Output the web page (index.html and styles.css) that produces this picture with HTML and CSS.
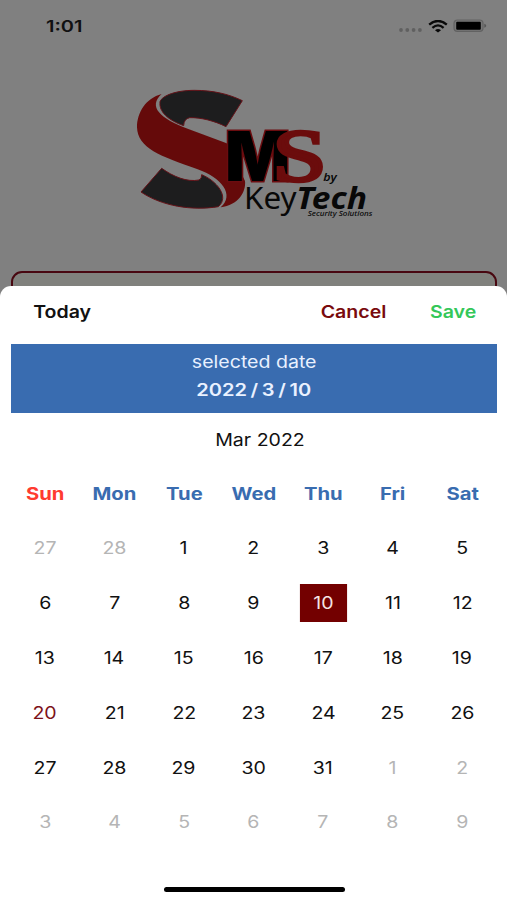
FILE: index.html
```
<!DOCTYPE html>
<html lang="en">
<head>
    <meta charset="UTF-8">
    <meta name="viewport" content="width=device-width, initial-scale=1.0">
    <title>SMS by KeyTech</title>
    <link rel="stylesheet" href="styles.css">
</head>
<body>
    <div class="screen">
        <!-- Status bar -->
        <div class="status-bar">
            <span class="time">1:01</span>
            <div class="status-icons">
                <svg class="signal" width="24" height="4" viewBox="0 0 24 4">
                    <circle cx="2" cy="2" r="1.9"/>
                    <circle cx="8.3" cy="2" r="1.9"/>
                    <circle cx="14.6" cy="2" r="1.9"/>
                    <circle cx="20.9" cy="2" r="1.9"/>
                </svg>
                <svg class="wifi" width="20" height="13" viewBox="0 0 20 13">
                    <path d="M1.2 4.6Q10 -2.6 18.8 4.6" stroke-width="2.4"/>
                    <path d="M4.4 7.8Q10 3 15.6 7.8" stroke-width="2.3"/>
                    <path class="dot" d="M7 10.2Q10 7.8 13 10.2L10 12.6Z"/>
                </svg>
                <svg class="battery" width="34" height="14" viewBox="0 0 34 14">
                    <rect class="shell" x="1" y="1" width="29" height="11.4" rx="3.4"/>
                    <rect x="3.2" y="2.8" width="24.6" height="8" rx="1"/>
                    <path class="cap" d="M31.3 4.8Q33.2 5.4 33.2 6.8T31.3 8.8Z"/>
                </svg>
            </div>
        </div>

        <!-- Logo -->
        <svg class="logo" width="260" height="145" viewBox="0 0 780 435">
            <path class="logo-dark" d="M105 65C112 46 155 31 208 31C265 31 310 42 352 62L303 140C268 122 225 112 194 113Q177 116 176 137C130 120 101 96 105 65Z"/>
            <path class="logo-dark" d="M110 265C145 290 186 307 222 300Q231 296 230 284C274 302 315 350 280 380C200 393 110 378 48 336Z"/>
            <path class="logo-red" d="M110 42C62 55 36 98 36 142C38 205 105 228 218 268C290 293 330 345 287 382C340 376 364 335 360 303L305 190L190 147C105 116 68 80 110 42Z"/>
            <text class="logo-m" x="300" y="303" textLength="196" lengthAdjust="spacingAndGlyphs">M</text>
            <text class="logo-s" x="442" y="304" textLength="164" lengthAdjust="spacingAndGlyphs">S</text>
            <text class="logo-by" x="595" y="303" textLength="40" lengthAdjust="spacingAndGlyphs">by</text>
            <text class="logo-key" x="357" y="386" textLength="158" lengthAdjust="spacingAndGlyphs">Key</text>
            <text class="logo-tech" x="514" y="386" textLength="212" lengthAdjust="spacingAndGlyphs">Tech</text>
            <text class="logo-tag" x="548" y="409" textLength="194" lengthAdjust="spacingAndGlyphs">Security Solutions</text>
        </svg>

        <div class="field"></div>

        <!-- Date picker -->
        <div class="sheet">
            <div class="toolbar">
                <span class="today">Today</span>
                <span class="cancel">Cancel</span>
                <span class="save">Save</span>
            </div>

            <div class="selected-date">
                <span>selected date</span>
                <span class="value">2022 / 3 / 10</span>
            </div>

            <div class="month"><span>Mar 2022</span></div>

            <div class="weekdays">
                <span class="sunday">Sun</span>
                <span>Mon</span>
                <span>Tue</span>
                <span>Wed</span>
                <span>Thu</span>
                <span>Fri</span>
                <span>Sat</span>
            </div>

            <div class="days">
                <span class="other">27</span>
                <span class="other">28</span>
                <span>1</span>
                <span>2</span>
                <span>3</span>
                <span>4</span>
                <span>5</span>
                <span>6</span>
                <span>7</span>
                <span>8</span>
                <span>9</span>
                <span class="selected">10</span>
                <span>11</span>
                <span>12</span>
                <span>13</span>
                <span>14</span>
                <span>15</span>
                <span>16</span>
                <span>17</span>
                <span>18</span>
                <span>19</span>
                <span class="current">20</span>
                <span>21</span>
                <span>22</span>
                <span>23</span>
                <span>24</span>
                <span>25</span>
                <span>26</span>
                <span>27</span>
                <span>28</span>
                <span>29</span>
                <span>30</span>
                <span>31</span>
                <span class="other">1</span>
                <span class="other">2</span>
                <span class="other">3</span>
                <span class="other">4</span>
                <span class="other">5</span>
                <span class="other">6</span>
                <span class="other">7</span>
                <span class="other">8</span>
                <span class="other">9</span>
            </div>

            <div class="home-bar"></div>
        </div>
    </div>
</body>
</html>
```
FILE: styles.css
```
* {
    box-sizing: border-box;
}

body {
    margin: 0;
    font-family: Inter, "Liberation Sans", sans-serif;
    font-size: 17px;
    color: #111;
    background-color: #808080;
}

.screen {
    display: flex;
    flex-direction: column;
    height: 900px;
    overflow: hidden;
}

/* Status bar */
.status-bar {
    display: flex;
    justify-content: space-between;
    height: 52px;
    padding: 0 20px 0 46px;
    align-items: center;
    flex-shrink: 0;
}

.time {
    font-size: 16px;
    font-weight: 600;
    transform: scaleX(1.25);
    transform-origin: left;
}

.status-icons {
    display: flex;
    align-items: center;
}

.signal {
    margin: 8px 5px 0 0;
    fill: #606060;
}

.wifi {
    margin-right: 5px;
    fill: none;
    stroke: #080808;
}

.wifi .dot {
    fill: #080808;
    stroke: none;
}

.battery .shell {
    fill: #777;
    stroke: #626262;
    stroke-width: 1.2;
}

.battery .cap {
    fill: #555;
}

/* Logo */
.logo {
    flex-shrink: 0;
    margin: 28px 0 0 125px;
}

.logo-dark {
    fill: #1d1d1e;
    stroke: #651218;
    stroke-width: 3;
}

.logo-red {
    fill: #650a0a;
}

.logo-m {
    font: 900 208px Inter, sans-serif;
    fill: #000;
    stroke: #6b0c0f;
    stroke-width: 9;
    paint-order: stroke;
}

.logo-s {
    font: 224px "Liberation Serif", serif;
    fill: #6b0c0c;
    stroke: #6b0c0c;
    stroke-width: 10;
}

.logo-by,
.logo-key,
.logo-tech,
.logo-tag {
    font-family: "Noto Sans", sans-serif;
    fill: #080808;
}

.logo-by {
    font-size: 34px;
    font-style: italic;
    font-weight: 600;
}

.logo-key {
    font-size: 90px;
}

.logo-tech {
    font-size: 90px;
    font-style: italic;
    font-weight: 700;
}

.logo-tag {
    font-size: 21px;
    font-style: italic;
    font-weight: 500;
}

.field {
    flex-shrink: 0;
    height: 50px;
    margin: 46px 10px -35px 11px;
    border: 2px solid #480710;
    border-radius: 11px;
    background-color: #80817d;
}

/* Date picker */
.sheet {
    display: flex;
    flex-direction: column;
    flex: 1;
    padding: 0 10px 0 11px;
    border-radius: 11px 11px 0 0;
    background-color: #fff;
    z-index: 1;
}

/* Wide lettering */
.sheet span {
    transform: scaleX(1.15);
}

.toolbar {
    display: flex;
    align-items: center;
    height: 58px;
    padding: 0 24px 7px 26px;
    font-weight: 600;
}

.cancel {
    margin-left: auto;
    margin-right: 51px;
    color: #790a0d;
}

.save {
    color: #34c759;
}

.selected-date {
    display: flex;
    flex-direction: column;
    align-items: center;
    height: 69px;
    padding-top: 4px;
    line-height: 28px;
    color: #e9f1ff;
    background-color: #396cb0;
}

.selected-date .value {
    font-weight: 600;
    word-spacing: -1.2px;
    transform: scaleX(1.18);
}

.month {
    display: flex;
    align-items: center;
    justify-content: center;
    height: 53px;
    padding-left: 12px;
}

.weekdays,
.days {
    display: grid;
    grid-template-columns: repeat(7, 1fr);
    align-items: center;
    justify-items: center;
    margin-left: -1px;
}

.weekdays {
    height: 55px;
    font-weight: 700;
    color: #396cb0;
}

.weekdays span {
    transform: scaleX(1.19);
}

.weekdays .sunday {
    color: #ff3b30;
}

.days {
    grid-auto-rows: 54.8px;
}

.days .other {
    color: #b5b5b5;
}

.days .current {
    color: #7d1219;
}

.days .selected {
    width: 41px;
    line-height: 38px;
    text-align: center;
    color: #f5e4e4;
    background-color: #730000;
}

.home-bar {
    width: 181px;
    height: 5px;
    margin: auto auto 8px;
    border-radius: 3px;
    background-color: #000;
}
```
